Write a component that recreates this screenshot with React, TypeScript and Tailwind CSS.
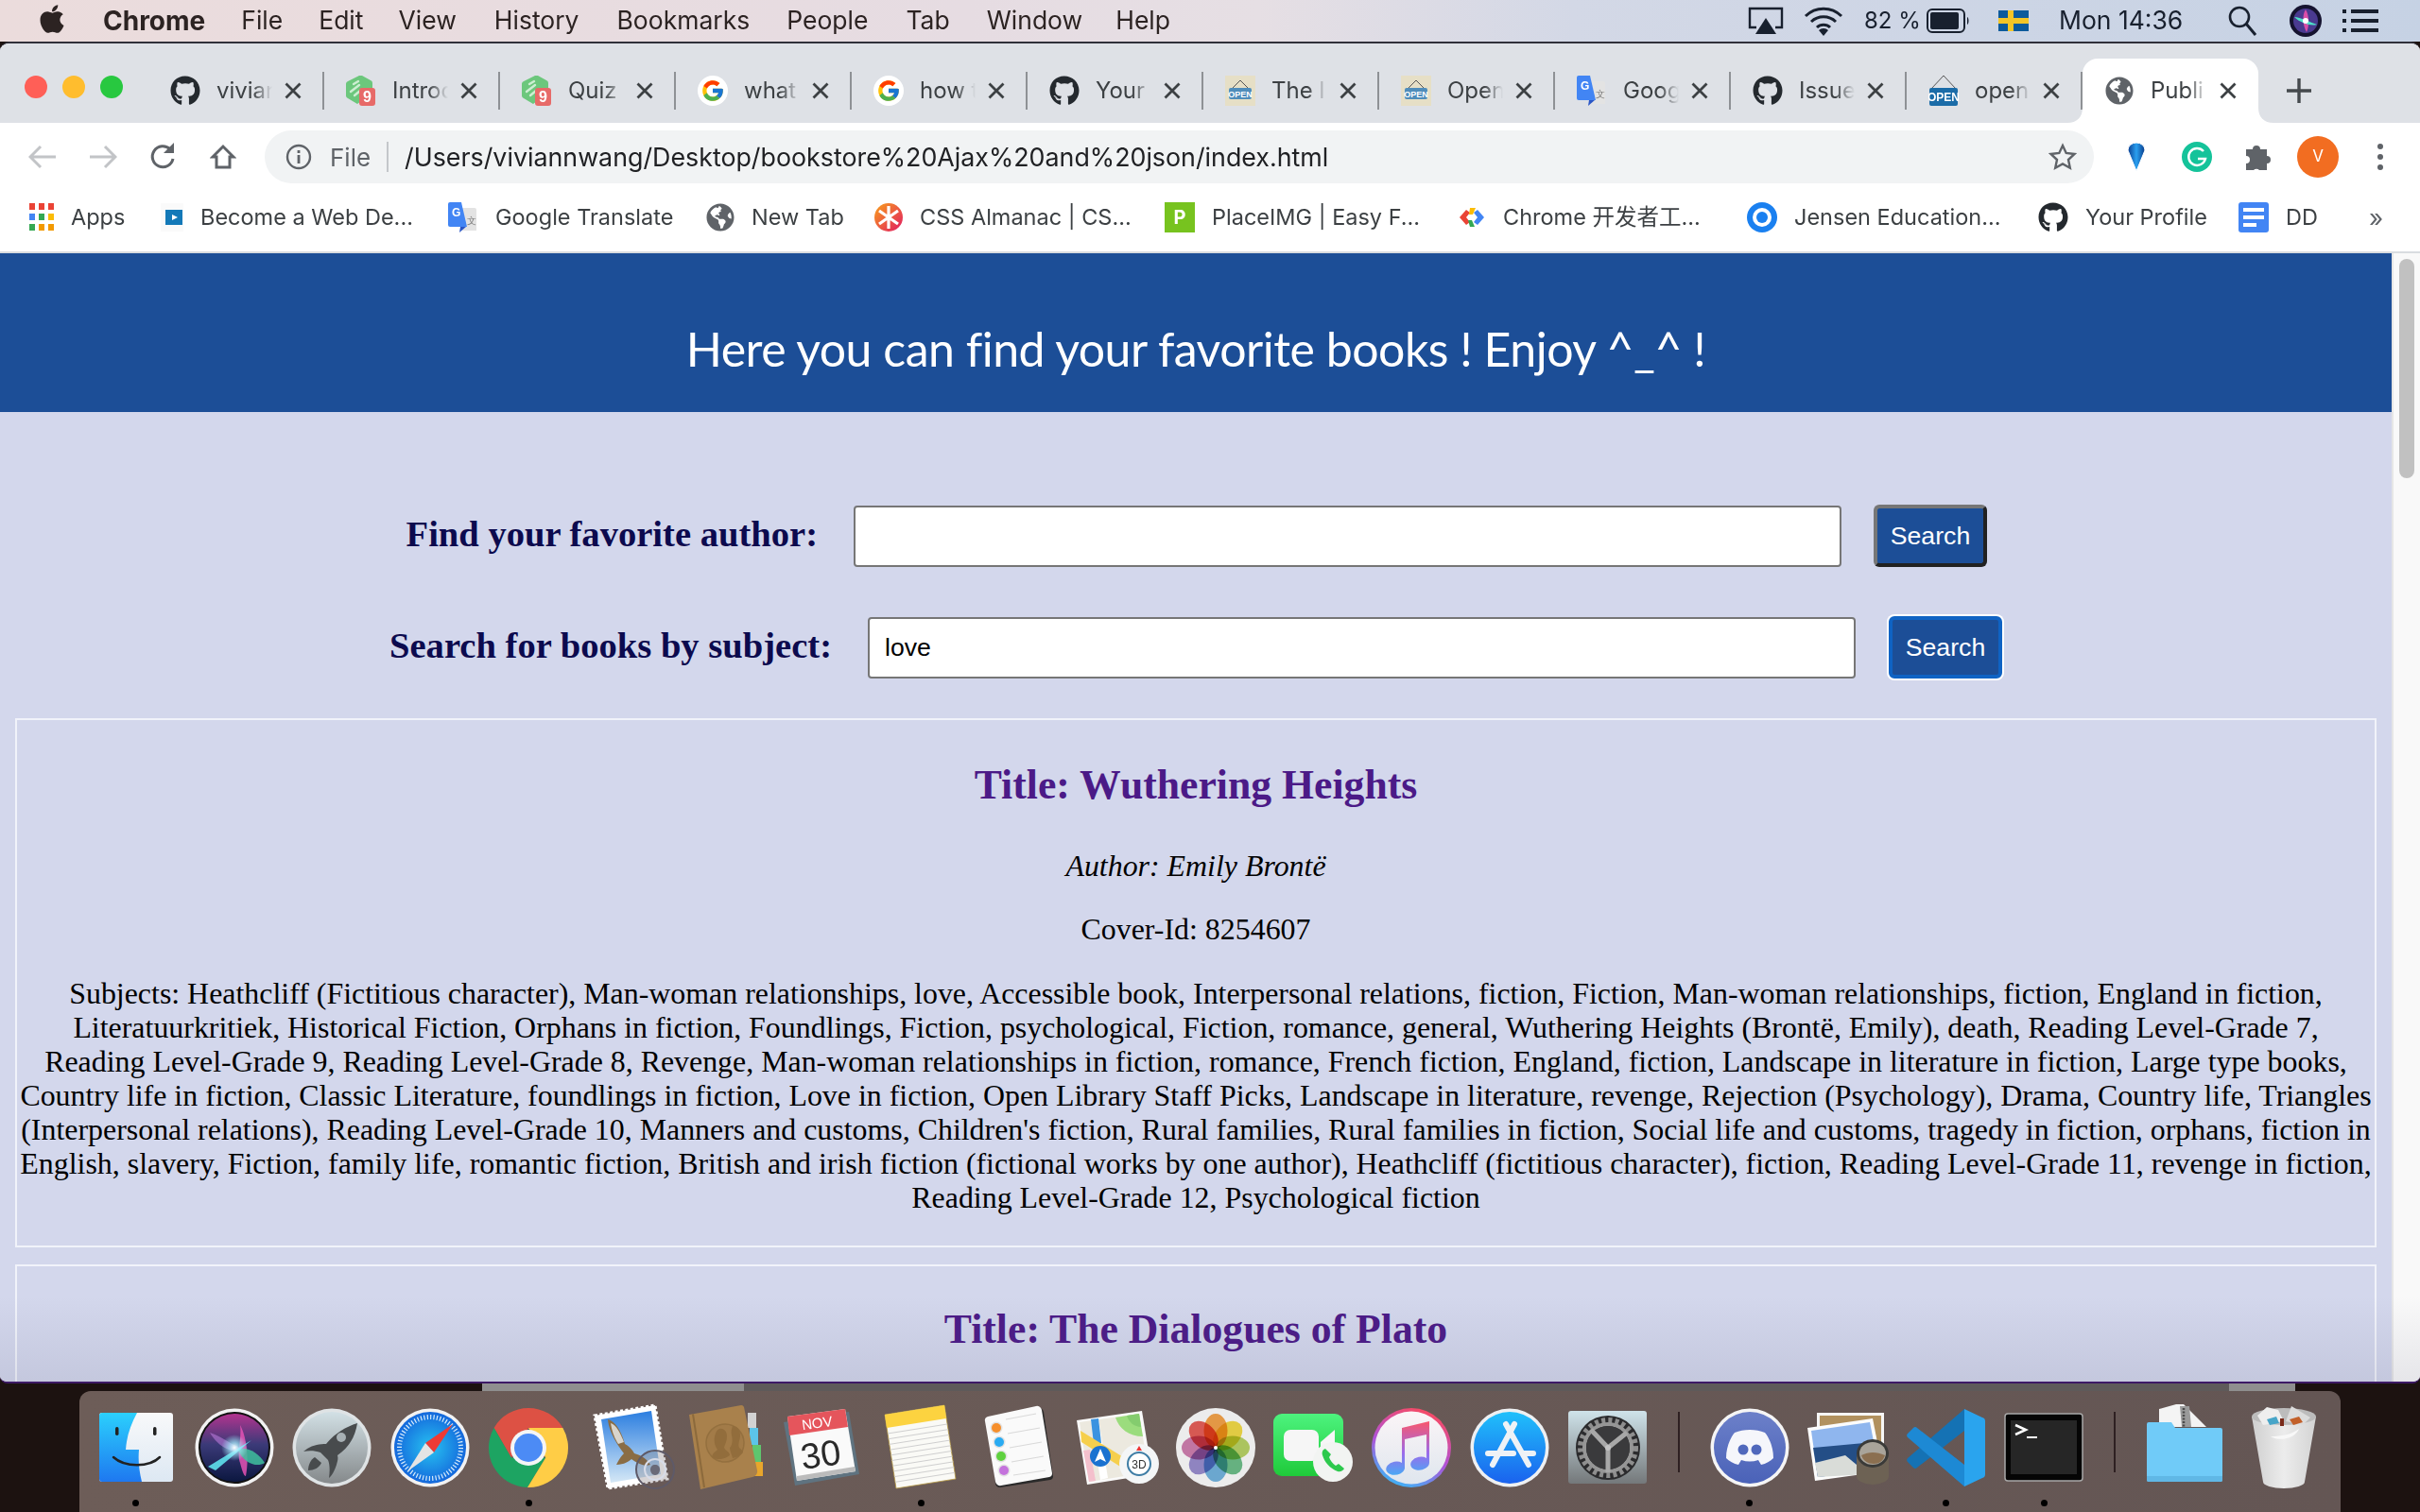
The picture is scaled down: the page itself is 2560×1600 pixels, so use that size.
import React from "react";
import { FaApple, FaGithub, FaGlobeAmericas } from "react-icons/fa";
import { FcGoogle } from "react-icons/fc";

const X = () => (
  <svg width="18" height="18" viewBox="0 0 18 18" className="shrink-0"><path d="M1.500 1.500L16.500 16.500M16.500 1.500L1.500 16.500" stroke="#3c4043" strokeWidth="2.8" /></svg>
);
const GT = ({ s = 32 }: { s?: number }) => (
  <svg width={s} height={s} viewBox="0 0 32 32" className="shrink-0">
    <path d="M14 6h14a2 2 0 0 1 2 2v22H14z" fill="#e3e3e3" />
    <path d="M2 0h12l6 26H2a2 2 0 0 1-2-2V2a2 2 0 0 1 2-2z" fill="#4285f4" />
    <path d="M13 26l-1 6 7-6z" fill="#2a56c6" />
    <text x="4" y="15" fontSize="12" fontWeight="700" fill="#fff" fontFamily="Liberation Sans">G</text>
    <text x="20" y="23" fontSize="10" fill="#777" fontFamily="Liberation Sans">文</text>
  </svg>
);
const Nine = () => (
  <svg width="32" height="32" viewBox="0 0 32 32" className="shrink-0">
    <path d="M14 0a4 4 0 0 1 3 0l9 5a3 3 0 0 1 2 3v10L12 30 2 24a3 3 0 0 1-2-3V9a3 3 0 0 1 2-3z" fill="#6cc77c" />
    <path d="M5 17l9-7M8 9l5-3M9 21l6-5" stroke="#cdeed2" strokeWidth="2.4" strokeLinecap="round" />
    <rect x="14" y="13" width="17" height="19" rx="3" fill="#e76a68" />
    <text x="22.500" y="28" fontSize="16" fontWeight="700" fill="#fff" textAnchor="middle" fontFamily="Liberation Sans">9</text>
  </svg>
);
const GoogleFav = () => (
  <span className="w-[32px] h-[32px] rounded-full bg-white flex items-center justify-center shrink-0"><FcGoogle size={26} /></span>
);
const OpenFav = () => (
  <svg width="32" height="32" viewBox="0 0 32 32" className="shrink-0">
    <rect width="32" height="32" fill="#e6dfc6" />
    <path d="M16 5L7 14M16 5l9 9" stroke="#555" strokeWidth="1" />
    <rect x="4" y="13" width="24" height="12" rx="2" fill="#4f8dbb" />
    <text x="16" y="22.500" fontSize="9" fontWeight="700" fill="#fff" textAnchor="middle" fontFamily="Liberation Sans">OPEN</text>
  </svg>
);
const OpenFav2 = () => (
  <svg width="32" height="32" viewBox="0 0 32 32" className="shrink-0">
    <path d="M16 0L3 14M16 0l13 14" stroke="#555" strokeWidth="1" fill="none" />
    <rect x="1" y="13" width="30" height="19" rx="2" fill="#1b6ca8" />
    <text x="16" y="27" fontSize="12" fontWeight="700" fill="#fff" textAnchor="middle" fontFamily="Liberation Sans">OPEN</text>
  </svg>
);
const GH = () => <FaGithub size={32} color="#24292e" className="shrink-0" />;
const Globe = () => <FaGlobeAmericas size={30} color="#5f6368" className="shrink-0" />;

const tabs: [React.ReactNode, string][] = [
  [<GH />, "vivian"], [<Nine />, "Introd"], [<Nine />, "Quiz"], [<GoogleFav />, "what"], [<GoogleFav />, "how t"], [<GH />, "Your"],
  [<OpenFav />, "The l"], [<OpenFav />, "Open"], [<GT />, "Goog"], [<GH />, "Issue"], [<OpenFav2 />, "open"],
];

const Flare = ({ flip }: { flip?: boolean }) => (
  <svg width="16" height="16" viewBox="0 0 16 16" className={flip ? "absolute bottom-0 right-[-16px]" : "absolute bottom-0 left-[-16px]"}>
    <path d={flip ? "M0 0C0 10 6 16 16 16H0z" : "M16 0C16 10 10 16 0 16H16z"} fill="#fff" />
  </svg>
);

const Tab = ({ icon, label }: { icon: React.ReactNode; label: string }) => (
  <div className="w-[186px] h-[68px] flex items-center shrink-0">
    <span className="ml-[23px] w-[32px] flex justify-center shrink-0">{icon}</span>
    <span className="ml-[17px] w-[60px] overflow-hidden whitespace-nowrap text-[24px] text-[#3c4043] [mask-image:linear-gradient(to_right,black_65%,transparent)]">{label}</span>
    <span className="ml-[13px]"><X /></span>
    <span className="ml-[22px] w-[2px] h-[40px] bg-[#8e9195] shrink-0" />
  </div>
);

const bookmarks: [React.ReactNode, string, string][] = [
  [
    <svg width="26" height="30" viewBox="0 0 26 30"><g>
      {[["#ea4335", "#ea4335", "#ea4335"], ["#4285f4", "#34a853", "#fbbc05"], ["#34a853", "#f29900", "#f29900"]].map((r, i) =>
        r.map((c, j) => <rect key={`${i}${j}`} x={j * 10} y={i * 11} width="6" height="7" fill={c} />))}
    </g></svg>, "Apps", "ml-[31px] w-[103px]"],
  [<svg width="24" height="30" viewBox="0 0 24 30"><rect width="24" height="30" fill="#fafafa" /><rect x="5" y="7" width="18" height="16" fill="#1379b8" /><path d="M12 12l6 3-6 3z" fill="#fff" /></svg>, "Become a Web De...", "ml-[36px] w-[270px]"],
  [<GT />, "Google Translate", "ml-[34px] w-[239px]"],
  [<Globe />, "New Tab", "ml-[34px] w-[145px]"],
  [
    <svg width="30" height="32" viewBox="0 0 30 32"><defs><linearGradient id="cssg" x1="0" y1="0" x2="1" y2="1"><stop offset="0" stopColor="#f9a11b" /><stop offset="1" stopColor="#e01a63" /></linearGradient></defs><circle cx="15" cy="16" r="15" fill="url(#cssg)" /><path d="M15 4v24M5 9l20 14M25 9L5 23" stroke="#fff" strokeWidth="3.2" /></svg>,
    "CSS Almanac | CS...", "ml-[33px] w-[271px]"],
  [<span className="w-[32px] h-[32px] bg-[#77c31f] flex items-center justify-center text-white font-bold text-[20px]">P</span>, "PlaceIMG | Easy F...", "ml-[36px] w-[268px]"],
  [
    <svg width="30" height="26" viewBox="0 0 30 26"><path d="M2 13L9 5l4 3-4 5 4 5-4 3z" fill="#ea4335" /><path d="M13 3h6l-3 7h-4z" fill="#fbbc05" /><path d="M28 13l-7-8-4 3 4 5-4 5 4 3z" fill="#4285f4" /><path d="M13 23h5l-3-7h-4z" fill="#34a853" /></svg>,
    "Chrome 开发者工...", "ml-[42px] w-[261px]"],
  [
    <svg width="32" height="32" viewBox="0 0 32 32"><circle cx="16" cy="16" r="16" fill="#1a80f0" /><circle cx="16" cy="16" r="10" fill="#fff" /><circle cx="16" cy="16" r="6" fill="#1a80f0" /></svg>,
    "Jensen Education...", "ml-[45px] w-[267px]"],
  [<GH />, "Your Profile", "ml-[41px] w-[179px]"],
  [
    <svg width="32" height="32" viewBox="0 0 32 32"><rect width="32" height="32" rx="3" fill="#4285f4" /><rect x="5" y="6" width="22" height="4" fill="#fff" /><rect x="5" y="14" width="22" height="4" fill="#fff" /><rect x="5" y="22" width="14" height="4" fill="#fff" /></svg>,
    "DD", "ml-[33px] w-[83px]"],
];

const Finder = () => (
  <svg viewBox="0 0 84 84">
    <defs>
      <linearGradient id="f1" x1="0" y1="0" x2="0" y2="1"><stop offset="0" stopColor="#2bd0fd" /><stop offset="1" stopColor="#1e78f0" /></linearGradient>
      <linearGradient id="f2" x1="0" y1="0" x2="0" y2="1"><stop offset="0" stopColor="#f8f9fa" /><stop offset="1" stopColor="#dde8f3" /></linearGradient>
    </defs>
    <rect x="3" y="5" width="78" height="73" rx="3" fill="url(#f2)" />
    <path d="M6 5h37C36 18 32 30 31 44h14c-1 11 0 22 3 34H6a3 3 0 0 1-3-3V8a3 3 0 0 1 3-3z" fill="url(#f1)" />
    <rect x="20" y="20" width="3.500" height="9" rx="1.700" fill="#222" /><rect x="60" y="20" width="3.500" height="9" rx="1.700" fill="#222" />
    <path d="M18 52c12 11 38 11 49 0" stroke="#222" strokeWidth="2.500" fill="none" strokeLinecap="round" />
  </svg>
);
const Siri = () => (
  <svg viewBox="0 0 84 84">
    <defs>
      <linearGradient id="s1" x1="0" y1="0" x2="0" y2="1"><stop offset="0" stopColor="#b3348f" /><stop offset="0.45" stopColor="#3b3a78" /><stop offset="1" stopColor="#0b1740" /></linearGradient>
      <radialGradient id="s2"><stop offset="0" stopColor="#ffffff" /><stop offset="0.4" stopColor="#a8f0ff" stopOpacity=".7" /><stop offset="1" stopColor="#a8f0ff" stopOpacity="0" /></radialGradient>
    </defs>
    <circle cx="42" cy="42" r="41.500" fill="#f2f2f2" /><circle cx="42" cy="42" r="38" fill="#111" /><circle cx="42" cy="42" r="36" fill="url(#s1)" />
    <path d="M48 18c2 14-4 30 0 40 2 8 4 14 6 14C58 52 54 28 48 18z" fill="#e552b4" opacity=".85" />
    <path d="M16 26c12 4 22 12 32 16-8 8-24-2-32-16z" fill="#b77ad8" opacity=".6" />
    <path d="M46 44c10-4 22 4 28 14-10 6-24-2-28-14z" fill="#3fbf9d" opacity=".85" />
    <path d="M14 62L60 34 22 66z" fill="#63ecf6" opacity=".85" />
    <circle cx="42" cy="42" r="14" fill="url(#s2)" />
  </svg>
);
const Rocket = () => (
  <svg viewBox="0 0 84 84">
    <defs><linearGradient id="r1" x1="0" y1="0" x2="0" y2="1"><stop offset="0" stopColor="#d2e0e5" /><stop offset="1" stopColor="#85898b" /></linearGradient></defs>
    <circle cx="42" cy="42" r="41.500" fill="#dfe3e5" /><circle cx="42" cy="42" r="38" fill="url(#r1)" />
    <path d="M69 16C56 20 44 28 36 38c-6 0-14 1-20 5l-4 3c6-1 12-1 18 1l8 8c2 5 2 12 1 19 3-2 6-8 8-14 1-4 2-6 1-10C60 42 67 30 69 16z" fill="#484b4d" />
    <path d="M24 52c-4 2-7 8-7 14 6 0 12-3 14-8z" fill="#484b4d" />
    <circle cx="52" cy="31" r="5" fill="#a7b0b4" />
  </svg>
);
const Safari = () => (
  <svg viewBox="0 0 84 84">
    <defs><radialGradient id="sa"><stop offset="0" stopColor="#27c2f1" /><stop offset="1" stopColor="#1468dc" /></radialGradient></defs>
    <circle cx="42" cy="42" r="41.500" fill="#f2f2f2" /><circle cx="42" cy="42" r="38" fill="url(#sa)" />
    <circle cx="42" cy="42" r="32.500" fill="none" stroke="#d9ecfb" strokeWidth="5" strokeDasharray="1.200 2.200" />
    <path d="M66 17L37 37l9 10z" fill="#ee3a35" /><path d="M18 67L37 37l9 10z" fill="#e4e4e4" />
  </svg>
);
const Chrome = () => (
  <svg viewBox="0 0 84 84">
    <path d="M5.600 21A42 42 0 0 1 78.400 21H42L23.800 52.500z" fill="#dd5144" />
    <path d="M5.600 21A42 42 0 0 0 41 84L60.200 52.500H23.800z" fill="#1da462" />
    <path d="M78.400 21A42 42 0 0 1 41 84L60.200 52.500 42 21z" fill="#ffcd46" />
    <circle cx="42" cy="42" r="19" fill="#f5f5f5" /><circle cx="42" cy="42" r="15" fill="#4c8bf5" />
  </svg>
);
const Mail = () => (
  <svg viewBox="0 0 84 84">
    <defs><linearGradient id="m1" x1="0" y1="0" x2="0" y2="1"><stop offset="0" stopColor="#2b7ee0" /><stop offset="1" stopColor="#d5e8f6" /></linearGradient></defs>
    <path d="M8 8L72 -3 85 75 22 85z" fill="#fff" stroke="#fff" strokeWidth="3" strokeDasharray="3 2.500" />
    <path d="M15 12L68 3 78 70 25 79z" fill="url(#m1)" />
    <path d="M22 12c8 2 14 12 18 26 4 2 8 6 10 10 6 2 12 4 17 12-8 2-14-2-20-6-2 2-8 6-16 6 2-4 4-8 8-12-8-10-16-24-17-36z" fill="#8a6d45" />
    <path d="M25 16c6 2 10 10 14 20l-6 2c-4-6-7-14-8-22z" fill="#d8d4cc" />
    <circle cx="72" cy="65" r="20" fill="#5e5258" fillOpacity=".25" stroke="#5e5a68" strokeWidth="2" /><circle cx="72" cy="65" r="11" fill="none" stroke="#d8dce8" strokeWidth="2" />
    <path d="M72 60c3 0 5 2 5 5s-2 6-5 6-5-3-5-6 2-5 5-5z" fill="#6a6a78" />
  </svg>
);
const Contacts = () => (
  <svg viewBox="0 0 84 84">
    <rect x="66" y="5" width="9" height="16" fill="#d2d2d2" /><rect x="68" y="21" width="9" height="18" fill="#5cc4e8" /><rect x="71" y="39" width="9" height="18" fill="#5fc66e" /><rect x="73" y="57" width="9" height="15" fill="#e8a62c" />
    <path d="M4 7L59 -3a3 3 0 0 1 3 2L76 66a6 6 0 0 1-5 7L16 86z" fill="#a9814c" />
    <path d="M8 6.300L20 84" stroke="#8c6a3c" strokeWidth="2" />
    <circle cx="42" cy="37" r="20" fill="#a27b48" stroke="#94703f" strokeWidth="1.500" />
    <path d="M36 22c5-1 8 3 8 8 0 6-3 10-3 12 2 4 6 4 6 8-5 4-12 5-18 3-2-4 2-6 5-9-3-4-4-9-3-14 1-4 2-7 5-8zM50 19c5 0 8 4 8 10 0 5-3 9-1 13 2 2 4 3 4 5-2 3-6 5-11 6-1-4-3-8-3-11 3-3 3-9 2-13-1-4 0-7 1-10z" fill="#926d3c" />
  </svg>
);
const Cal = () => (
  <svg viewBox="0 0 84 84">
    <path d="M1 15L70 4l11 66-68 12z" fill="#5f7380" />
    <path d="M5 9L66 1l11 66-62 10z" fill="#fafafa" />
    <path d="M15 72L76 62l1 5-62 10z" fill="#bbbbbb" />
    <path d="M5 9L66 1l3 19-62 9z" fill="#e5555c" />
    <text x="37" y="21" fontSize="15" fill="#fff" textAnchor="middle" transform="rotate(-8 37 21)" fontFamily="Liberation Sans">NOV</text>
    <text x="42" y="62" fontSize="38" fill="#2a2a2a" textAnchor="middle" transform="rotate(-8 42 62)" fontFamily="Liberation Sans">30</text>
  </svg>
);
const Notes = () => (
  <svg viewBox="0 0 84 84">
    <path d="M4 7L67 -3 79 75 16 85z" fill="#fafaf6" stroke="#b79a44" strokeWidth=".8" />
    <path d="M4 7L67 -3 69 11 6 21z" fill="#fcd340" />
    {[0, 1, 2, 3, 4, 5, 6, 7, 8, 9].map((i) => (
      <path key={i} d={`M${7 + i * 0.9} ${27 + i * 5.700}L${70 + i * 0.9} ${17 + i * 5.700}`} stroke="#cfcfcf" strokeWidth="1" />
    ))}
  </svg>
);
const Reminders = () => (
  <svg viewBox="0 0 84 84">
    <path d="M10 12L62 0a5 5 0 0 1 6 4l10 68a4 4 0 0 1-3 4L22 84a5 5 0 0 1-5-4z" fill="#2a2a2a" />
    <path d="M9 9L60 -2a5 5 0 0 1 6 4l11 67a4 4 0 0 1-3 4L23 82a5 5 0 0 1-6-4L6 14a4 4 0 0 1 3-5z" fill="#fafafa" />
    <circle cx="18" cy="21" r="6.500" fill="#e2e2e2" /><circle cx="18" cy="21" r="5" fill="#f68f2c" />
    <circle cx="21" cy="36" r="6.500" fill="#e2e2e2" /><circle cx="21" cy="36" r="5" fill="#2aabf2" />
    <circle cx="23" cy="51" r="6.500" fill="#e2e2e2" /><circle cx="23" cy="51" r="5" fill="#5fd13f" />
    <circle cx="26" cy="66" r="6.500" fill="#e2e2e2" /><circle cx="26" cy="66" r="5" fill="#c473dc" />
    <path d="M28 12L60 6M30 27L64 21M32 42L66 36M34 57L68 51M36 71L70 66" stroke="#d9d9d9" strokeWidth="1.200" />
  </svg>
);
const Maps = () => (
  <svg viewBox="0 0 84 84">
    <path d="M-1 13L68 3 79 70 10 81z" fill="#fafafa" />
    <path d="M2 15L65 6l10 62L12 78z" fill="#ece9df" />
    <path d="M40 10L65 6l4 24C54 30 44 22 40 10z" fill="#9bdc7d" />
    <path d="M52 8L65 6l2 14C60 20 54 15 52 8z" fill="#84cc6e" />
    <path d="M6 45L13 44l6 33-7 1z" fill="#f4c0cc" />
    <path d="M14 12L22 11 32 74 24 76z" fill="#fff" />
    <path d="M14 12L22 11 25 37 17 38z" fill="#3b93e0" />
    <path d="M3 24L58 58 50 65 4 36z" fill="#f6cf4c" />
    <circle cx="24" cy="51" r="11" fill="#1a72d0" /><path d="M24 43l6 14-6-3-6 3z" fill="#fff" />
    <circle cx="65" cy="59" r="21" fill="#f4f6f7" /><circle cx="65" cy="59" r="12" fill="#fff" stroke="#3e7da5" strokeWidth="2" />
    <text x="65" y="63.500" fontSize="12" fill="#333" textAnchor="middle" fontFamily="Liberation Sans">3D</text>
    <path d="M65 40l3 5h-6z" fill="#e33" />
  </svg>
);
const Photos = () => (
  <svg viewBox="0 0 84 84">
    <circle cx="42" cy="42" r="42" fill="#ececec" />
    {([["#f6a44a", 0], ["#f4dc48", 45], ["#b9d466", 90], ["#6ec08a", 135], ["#74b5e0", 180], ["#9b8fd0", 225], ["#d17fb0", 270], ["#e8605a", 315]] as [string, number][]).map(([c, a]) => (
      <ellipse key={a} cx="42" cy="24" rx="12.500" ry="18" fill={c} className="mix-blend-multiply" transform={`rotate(${a} 42 42)`} />
    ))}
    <circle cx="42" cy="42" r="2" fill="#fff" />
  </svg>
);
const FaceTime = () => (
  <svg viewBox="0 0 84 84">
    <defs><linearGradient id="ft" x1="0" y1="0" x2="0" y2="1"><stop offset="0" stopColor="#4df37e" /><stop offset="1" stopColor="#1fca3a" /></linearGradient></defs>
    <rect x="0" y="6" width="74" height="66" rx="9" fill="url(#ft)" />
    <rect x="11" y="23" width="37" height="33" rx="7" fill="#f6f6f6" /><path d="M50 36l15-13v30L50 44z" fill="#f6f6f6" />
    <circle cx="63" cy="57" r="21" fill="#f2f4f2" />
    <path d="M55 43c-3 1-4 4-3 7 2 7 8 14 16 17 3 1 6-1 7-3l-6-5-3 2c-3-2-6-6-7-9l2-3z" fill="#2dc94d" />
  </svg>
);
const Music = () => (
  <svg viewBox="0 0 84 84">
    <defs>
      <linearGradient id="mu" x1="0.7" y1="0" x2="0.3" y2="1"><stop offset="0" stopColor="#fb4a5e" /><stop offset="0.55" stopColor="#b052d8" /><stop offset="1" stopColor="#38b8f8" /></linearGradient>
      <linearGradient id="mn" x1="0.5" y1="0" x2="0.5" y2="1"><stop offset="0" stopColor="#f9576c" /><stop offset="0.6" stopColor="#9a6cec" /><stop offset="1" stopColor="#4aa8f4" /></linearGradient>
      <linearGradient id="mb" x1="0" y1="0" x2="0" y2="1"><stop offset="0" stopColor="#fbf5f7" /><stop offset="1" stopColor="#dfe6ee" /></linearGradient>
    </defs>
    <circle cx="42" cy="42" r="42" fill="url(#mu)" /><circle cx="42" cy="42" r="38.500" fill="url(#mb)" />
    <path d="M61 14L32 21v37a10 7 -10 1 0 3 6V33l23-5v25a10 7 -10 1 0 3 5z" fill="url(#mn)" />
  </svg>
);
const AppStore = () => (
  <svg viewBox="0 0 84 84">
    <defs><linearGradient id="as" x1="0" y1="0" x2="0" y2="1"><stop offset="0" stopColor="#20c0fb" /><stop offset="1" stopColor="#1a62ee" /></linearGradient></defs>
    <circle cx="42" cy="42" r="41.500" fill="#eef0f2" /><circle cx="42" cy="42" r="38" fill="url(#as)" />
    <path d="M47 17L24 60M38 17L62 60M19 48H46M56 48H67" stroke="#eef2f6" strokeWidth="6" strokeLinecap="round" />
  </svg>
);
const Prefs = () => (
  <svg viewBox="0 0 84 84">
    <defs><linearGradient id="pr" x1="0" y1="0" x2="0" y2="1"><stop offset="0" stopColor="#cfe3ea" /><stop offset="1" stopColor="#74787a" /></linearGradient></defs>
    <rect x="0" y="3" width="83" height="77" rx="3" fill="url(#pr)" />
    <circle cx="42" cy="42" r="34" fill="#2b2b2d" />
    <circle cx="42" cy="42" r="29" fill="none" stroke="#8e8e8e" strokeWidth="6" strokeDasharray="4 3.200" />
    <circle cx="42" cy="42" r="25" fill="none" stroke="#969696" strokeWidth="4" />
    <circle cx="42" cy="42" r="23" fill="#3a3a3c" />
    <path d="M42 42L24 23M42 42L62 26M42 42V68" stroke="#a8a8a8" strokeWidth="5" />
    <circle cx="42" cy="42" r="3" fill="#c4c4c4" />
  </svg>
);
const Discord = () => (
  <svg viewBox="0 0 84 84">
    <defs><linearGradient id="dc" x1="0" y1="0" x2="0" y2="1"><stop offset="0" stopColor="#6c80c9" /><stop offset="1" stopColor="#4a62b8" /></linearGradient></defs>
    <circle cx="42" cy="42" r="41.500" fill="#f5f5f5" /><circle cx="42" cy="42" r="38" fill="url(#dc)" />
    <path d="M26 26c5-2 10-3 16-3s11 1 16 3c5 6 9 16 9 27-3 3-8 6-13 7l-3-5c-6 2-12 2-18 0l-3 5c-5-1-10-4-13-7 0-11 4-21 9-27z" fill="#f5f6fb" />
    <circle cx="35" cy="44" r="5.500" fill="#5068bc" /><circle cx="49" cy="44" r="5.500" fill="#5068bc" />
  </svg>
);
const Preview = () => (
  <svg viewBox="0 0 84 84">
    <path d="M10 5h71v50H10z" fill="#f6f6f6" /><path d="M13 8h65v44H13z" fill="#b1915f" />
    <path d="M0 21L69 11l11 56L8 77z" fill="#fcfcfc" />
    <path d="M4 24L66 15l10 50L11 73z" fill="#8fb6ee" />
    <path d="M6 42L71 36l5 29L11 73z" fill="#244e86" />
    <path d="M8 58L40 50l24 20-53 3z" fill="#d9dcd8" />
    <path d="M52 48h34v24a17 9 0 0 1-34 0z" fill="#6d6254" />
    <ellipse cx="69" cy="48" rx="17" ry="15" fill="#3a3a38" /><ellipse cx="69" cy="48" rx="14" ry="12" fill="#a9a49a" />
    <path d="M57 50c8-4 16-4 25 0-2 6-6 9-12 9s-11-3-13-9z" fill="#8b6f50" />
  </svg>
);
const VSCode = () => (
  <svg viewBox="0 0 84 84">
    <path d="M62 1L62 24 12 63a3 3 0 0 1-4 0L2 57a3 3 0 0 1 0-4z" fill="#1572b4" />
    <path d="M8 21a3 3 0 0 1 4 0L62 60V83L2 31a3 3 0 0 1 0-4z" fill="#1d89d4" />
    <path d="M62 1L81 10a4 4 0 0 1 3 4V70a4 4 0 0 1-3 4L62 83z" fill="#2aa4ee" />
  </svg>
);
const Terminal = () => (
  <svg viewBox="0 0 84 84">
    <rect x="1" y="6" width="82" height="71" rx="3" fill="#050505" stroke="#a8a8a8" strokeWidth="1.500" />
    <rect x="7" y="13" width="70" height="57" fill="#262626" />
    <path d="M12 18l11 5-11 5" stroke="#fff" strokeWidth="2.500" fill="none" /><path d="M24 31h11" stroke="#fff" strokeWidth="2" />
  </svg>
);
const Folder = () => (
  <svg viewBox="0 0 84 84">
    <path d="M14 1L32 -4h8L64 20H14z" fill="#f4f4f4" />
    <path d="M36 -2h10l2 22H38z" fill="#9a9a9a" /><path d="M40 0v20" stroke="#4a4a4a" strokeWidth="2.500" strokeDasharray="2 1.500" />
    <path d="M1 17a2 2 0 0 1 2-2h24l4 6h48a2 2 0 0 1 2 2v53a2 2 0 0 1-2 2H3a2 2 0 0 1-2-2z" fill="#70cbf8" />
    <path d="M1 72h80v4a2 2 0 0 1-2 2H3a2 2 0 0 1-2-2z" fill="#60b8e6" />
  </svg>
);
const Trash = () => (
  <svg viewBox="0 0 84 84">
    <defs><linearGradient id="tr" x1="0" y1="0" x2="1" y2="0"><stop offset="0" stopColor="#cfcfcf" /><stop offset="0.5" stopColor="#ececec" /><stop offset="1" stopColor="#d4d4d4" /></linearGradient></defs>
    <path d="M8 9L20 78a22 7 0 0 0 44 0L76 9z" fill="url(#tr)" />
    <ellipse cx="42" cy="9" rx="34" ry="9" fill="#bcbcbc" />
    <path d="M14 8L24 -1l12 3 6 12-22 4z" fill="#eeeeee" /><path d="M44 14L50 -2l10 6 10 6-8 8z" fill="#dcdcdc" />
    <path d="M24 12l10-3 3 7-10 2z" fill="#47a5c8" /><path d="M48 12l10-3 4 6-10 3z" fill="#c2602a" /><path d="M38 11h4v8h-4z" fill="#7a2a1a" />
    <path d="M28 30c12 0 22-2 30-8-4 10-20 14-30 8z" fill="#f8f8f8" />
  </svg>
);

const dockA: [React.ReactNode, boolean][] = [
  [<Finder />, true], [<Siri />, false], [<Rocket />, false], [<Safari />, false], [<Chrome />, true], [<Mail />, false], [<Contacts />, false], [<Cal />, false],
  [<Notes />, true], [<Reminders />, false], [<Maps />, false], [<Photos />, false], [<FaceTime />, false], [<Music />, false], [<AppStore />, false], [<Prefs />, false],
];
const dockB: [React.ReactNode, boolean][] = [[<Discord />, true], [<Preview />, false], [<VSCode />, true], [<Terminal />, true]];
const dockC: [React.ReactNode, boolean][] = [[<Folder />, false], [<Trash />, false]];

const DockItem = ({ icon, dot }: { icon: React.ReactNode; dot: boolean }) => (
  <div className="w-[103.8px] shrink-0 flex flex-col items-center pt-[18px]">
    <div className="w-[84px] h-[84px] [&>svg]:overflow-visible">{icon}</div>
    <div className={dot ? "mt-[13px] w-[7px] h-[7px] rounded-full bg-black" : "mt-[13px] w-[7px] h-[7px]"} />
  </div>
);
const DockSep = () => (
  <div className="w-[46px] shrink-0 flex justify-center pt-[16px]"><div className="w-[2px] h-[64px] bg-[#2e2022] mt-[6px]" /></div>
);

export default function App() {
  return (
    <div className="w-[2560px] h-[1600px] overflow-hidden bg-[#1c1210] flex flex-col font-['Inter',sans-serif]">
      {/* menu bar */}
      <div className="h-[44px] shrink-0 flex items-center bg-[linear-gradient(90deg,#ebdcdc_0%,#e6dce2_40%,#e6dfe4_52%,#d3d8e6_65%,#c6d2e4_100%)] text-[#2c2322] text-[26.5px]">
        <FaApple size={34} color="#2c2322" className="ml-[38px] mb-[4px]" />
        <span className="ml-[37px] font-bold text-[28px]">Chrome</span>
        <span className="ml-[38px]">File</span>
        <span className="ml-[38px]">Edit</span>
        <span className="ml-[37px]">View</span>
        <span className="ml-[40px]">History</span>
        <span className="ml-[40px]">Bookmarks</span>
        <span className="ml-[39px]">People</span>
        <span className="ml-[40px]">Tab</span>
        <span className="ml-[39px]">Window</span>
        <span className="ml-[35px]">Help</span>
        <div className="ml-auto flex items-center text-[#18202e]">
          <svg width="38" height="30" viewBox="0 0 38 30"><path d="M9 22H2V2h34v20h-7" fill="none" stroke="#18202e" strokeWidth="2.400" /><path d="M19 12l11 17H8z" fill="#18202e" /></svg>
          <svg width="42" height="32" viewBox="0 0 42 32" className="ml-[21px]"><path d="M2 11a27 27 0 0 1 38 0M8 17a19 19 0 0 1 26 0M14 23a10 10 0 0 1 14 0" fill="none" stroke="#18202e" strokeWidth="3" /><path d="M21 32l-5-6a7 7 0 0 1 10 0z" fill="#18202e" /></svg>
          <span className="ml-[22px] w-[58px] text-[24px] whitespace-nowrap">82 %</span>
          <svg width="46" height="26" viewBox="0 0 46 26" className="ml-[8px]"><rect x="1" y="1" width="39" height="24" rx="5" fill="none" stroke="#18202e" strokeWidth="2" /><rect x="4" y="4" width="30" height="18" rx="2" fill="#18202e" /><path d="M43 9c2 1 2 7 0 8z" fill="#18202e" /></svg>
          <svg width="32" height="22" viewBox="0 0 32 22" className="ml-[30px]"><rect width="32" height="22" fill="#0b5a9c" /><rect x="10" width="6" height="22" fill="#f3c526" /><rect y="8" width="32" height="6" fill="#f3c526" /></svg>
          <span className="ml-[32px] w-[140px] whitespace-nowrap">Mon 14:36</span>
          <svg width="32" height="34" viewBox="0 0 32 34" className="ml-[38px]"><circle cx="13" cy="13" r="10" fill="none" stroke="#18202e" strokeWidth="2.600" /><path d="M20 20l10 12" stroke="#18202e" strokeWidth="3" /></svg>
          <svg width="34" height="34" viewBox="0 0 34 34" className="ml-[34px]">
            <circle cx="17" cy="17" r="17" fill="#15132f" /><circle cx="17" cy="17" r="13" fill="#4a3a90" />
            <path d="M17 5c4 6 4 18 1 24C14 22 13 11 17 5z" fill="#d94da8" /><path d="M5 13c6 0 18 6 24 8-7 2-18-2-24-8z" fill="#4de0c8" /><circle cx="17" cy="17" r="3" fill="#fff" />
          </svg>
          <svg width="38" height="24" viewBox="0 0 38 24" className="ml-[22px] mr-[44px]"><g fill="#18202e"><rect width="4" height="4" /><rect x="9" width="29" height="4" /><rect y="10" width="4" height="4" /><rect x="9" y="10" width="29" height="4" /><rect y="20" width="4" height="4" /><rect x="9" y="20" width="29" height="4" /></g></svg>
        </div>
      </div>

      {/* browser window */}
      <div className="h-[1420px] shrink-0 flex flex-col rounded-t-[10px] rounded-b-[8px] overflow-hidden border-t-[2px] border-[#30303a] border-b-[2px] border-b-[#3d1a66] bg-white">
        <div className="h-[84px] shrink-0 bg-[#dee1e6] flex items-end relative">
          <div className="absolute left-[26px] top-[34px] flex gap-[16px]">
            <span className="w-[24px] h-[24px] rounded-full bg-[#ff5f57]" />
            <span className="w-[24px] h-[24px] rounded-full bg-[#ffbd2e]" />
            <span className="w-[24px] h-[24px] rounded-full bg-[#28c840]" />
          </div>
          <div className="ml-[157px] flex">
            {tabs.map(([icon, label], i) => <Tab key={i} icon={icon} label={label} />)}
            <div className="relative w-[186px] h-[68px] bg-white rounded-t-[16px] flex items-center shrink-0">
              <Flare /><Flare flip />
              <span className="ml-[23px] w-[32px] flex justify-center"><Globe /></span>
              <span className="ml-[17px] w-[60px] overflow-hidden whitespace-nowrap text-[24px] text-[#3c4043] [mask-image:linear-gradient(to_right,black_65%,transparent)]">Publi</span>
              <span className="ml-[13px]"><X /></span>
            </div>
            <svg width="26" height="26" viewBox="0 0 26 26" className="ml-[30px] self-center"><path d="M13 0v26M0 13h26" stroke="#45494d" strokeWidth="3.400" /></svg>
          </div>
        </div>

        {/* toolbar */}
        <div className="h-[72px] shrink-0 bg-white flex items-center">
          <svg width="30" height="26" viewBox="0 0 30 26" className="ml-[30px]"><path d="M29 13H3M13 2L2 13l11 11" fill="none" stroke="#c2c4c7" strokeWidth="3" /></svg>
          <svg width="30" height="26" viewBox="0 0 30 26" className="ml-[34px]"><path d="M1 13h26M17 2l11 11-11 11" fill="none" stroke="#c2c4c7" strokeWidth="3" /></svg>
          <svg width="30" height="30" viewBox="0 0 30 30" className="ml-[34px]"><path d="M25 17a11 11 0 1 1-3-10" fill="none" stroke="#5f6368" strokeWidth="3" /><path d="M26 0v11H15z" fill="#5f6368" /></svg>
          <svg width="28" height="28" viewBox="0 0 28 28" className="ml-[34px]"><path d="M14 3L3 14h4v11h14V14h4z" fill="none" stroke="#5f6368" strokeWidth="3" strokeLinejoin="miter" /></svg>
          <div className="ml-[30px] w-[1935px] h-[56px] rounded-full bg-[#f1f3f4] flex items-center">
            <svg width="28" height="28" viewBox="0 0 28 28" className="ml-[22px]"><circle cx="14" cy="14" r="12" fill="none" stroke="#5f6368" strokeWidth="2.400" /><rect x="12.600" y="12" width="2.800" height="9" fill="#5f6368" /><rect x="12.600" y="7" width="2.800" height="3" fill="#5f6368" /></svg>
            <span className="ml-[19px] text-[26px] text-[#5f6368]">File</span>
            <span className="ml-[17px] w-[2px] h-[32px] bg-[#c4c7ca]" />
            <span className="ml-[17px] text-[26.8px] text-[#202124] whitespace-nowrap">/Users/viviannwang/Desktop/bookstore%20Ajax%20and%20json/index.html</span>
            <svg width="30" height="30" viewBox="0 0 30 30" className="ml-auto mr-[18px]"><path d="M15 3l3.700 8 8.800 1-6.500 6 1.800 8.700L15 22.400 7.200 26.700 9 18 2.500 12l8.800-1z" fill="none" stroke="#5f6368" strokeWidth="2.400" /></svg>
          </div>
          <svg width="20" height="32" viewBox="0 0 20 32" className="ml-[35px]"><defs><linearGradient id="pin" x1="0" y1="0" x2="1" y2="0"><stop offset="0" stopColor="#0a3d91" /><stop offset="0.5" stopColor="#2aa0f0" /><stop offset="1" stopColor="#083a8a" /></linearGradient></defs><path d="M10 31L1 9a9 8 0 0 1 18 0z" fill="url(#pin)" stroke="#fff" strokeWidth="1" /></svg>
          <svg width="32" height="32" viewBox="0 0 32 32" className="ml-[38px]"><circle cx="16" cy="16" r="16" fill="#15c39a" /><path d="M23 10a9 9 0 1 0 2 8h-8" fill="none" stroke="#fff" strokeWidth="2.400" /></svg>
          <svg width="32" height="32" viewBox="0 0 32 32" className="ml-[32px]"><path d="M4 8h7a4 4 0 0 1 8 0h7v7a4 4 0 0 1 0 8v7h-8a4 4 0 0 0-6 0H4v-7a4 4 0 0 0 0-8z" fill="#5f6368" /></svg>
          <span className="ml-[26px] w-[44px] h-[44px] rounded-full bg-[#f26d21] text-white text-[17px] flex items-center justify-center">V</span>
          <svg width="6" height="28" viewBox="0 0 6 28" className="ml-[41px]"><circle cx="3" cy="3" r="3" fill="#5f6368" /><circle cx="3" cy="14" r="3" fill="#5f6368" /><circle cx="3" cy="25" r="3" fill="#5f6368" /></svg>
        </div>

        {/* bookmarks */}
        <div className="h-[66px] shrink-0 bg-white border-b-[2px] border-[#d9dce0] pb-[8px] flex items-center text-[23.5px] text-[#3c4043] font-['Inter','Noto_Sans_CJK_SC',sans-serif]">
          {bookmarks.map(([icon, text, cls], i) => (
            <div key={i} className={`flex items-center shrink-0 whitespace-nowrap ${cls}`}>
              <span className="flex items-center justify-center shrink-0">{icon}</span>
              <span className="ml-[18px]">{text}</span>
            </div>
          ))}
          <span className="ml-[55px] text-[26px] text-[#5f6368]">»</span>
        </div>

        {/* page */}
        <div className="flex-1 min-h-0 flex relative overflow-hidden">
          <div className="w-[2530px] shrink-0 bg-[#d3d7ec] font-['Liberation_Serif',serif] text-black">
            <div className="h-[168px] bg-[#1c4e97] flex items-center justify-center pt-[34px]">
              <h1 className="font-['Lato',sans-serif] text-[50px] text-white tracking-[-0.5px] font-normal">Here you can find your favorite books ! Enjoy ^_^ !</h1>
            </div>

            <div className="mt-[98px] flex items-center justify-center h-[66px]">
              <label className="w-[437px] pb-[3px] whitespace-nowrap text-[38.6px] font-bold text-[#0c0a4e] text-right">Find your favorite author:</label>
              <input readOnly value="" className="ml-[38px] w-[1045px] h-[65px] bg-white border-[2px] border-[#767676] rounded-[4px] px-[16px] font-['Liberation_Sans',sans-serif] text-[26.67px]" />
              <button className="ml-[34px] w-[120px] h-[66px] bg-[#1c4e97] text-white text-[26.67px] font-['Liberation_Sans',sans-serif] rounded-[6px] border-[4px] border-t-[#767676] border-l-[#767676] border-r-[#212121] border-b-[#212121]">Search</button>
            </div>
            <div className="mt-[52px] flex items-center justify-center h-[66px]">
              <label className="w-[468px] pb-[3px] whitespace-nowrap text-[38.6px] font-bold text-[#0c0a4e] text-right">Search for books by subject:</label>
              <input readOnly value="love" className="ml-[38px] w-[1045px] h-[65px] bg-white border-[2px] border-[#767676] rounded-[4px] px-[16px] text-black font-['Liberation_Sans',sans-serif] text-[26.67px]" />
              <button className="ml-[35px] w-[120px] h-[66px] bg-[#1c4e97] text-white text-[26.67px] font-['Liberation_Sans',sans-serif] rounded-[6px] border-[4px] border-[#0f63c4] shadow-[0_0_0_2px_#ffffff]">Search</button>
            </div>

            <div className="mt-[42px] mx-[16px] border-[2px] border-[#f1f3fa] text-center text-[31.9px] leading-[36px] pb-[32px]">
              <h2 className="mt-[41px] mb-[41px] text-[43.7px] leading-[55px] font-bold text-[#4b1a87]">Title: Wuthering Heights</h2>
              <p className="italic">Author: Emily Brontë</p>
              <p className="mt-[31px]">Cover-Id: 8254607</p>
              <p className="mt-[32px] whitespace-nowrap">
                Subjects: Heathcliff (Fictitious character), Man-woman relationships, love, Accessible book, Interpersonal relations, fiction, Fiction, Man-woman relationships, fiction, England in fiction,<br />
                Literatuurkritiek, Historical Fiction, Orphans in fiction, Foundlings, Fiction, psychological, Fiction, romance, general, Wuthering Heights (Brontë, Emily), death, Reading Level-Grade 7,<br />
                Reading Level-Grade 9, Reading Level-Grade 8, Revenge, Man-woman relationships in fiction, romance, French fiction, England, fiction, Landscape in literature in fiction, Large type books,<br />
                Country life in fiction, Classic Literature, foundlings in fiction, Love in fiction, Open Library Staff Picks, Landscape in literature, revenge, Rejection (Psychology), Drama, Country life, Triangles<br />
                (Interpersonal relations), Reading Level-Grade 10, Manners and customs, Children's fiction, Rural families, Rural families in fiction, Social life and customs, tragedy in fiction, orphans, fiction in<br />
                English, slavery, Fiction, family life, romantic fiction, British and irish fiction (fictional works by one author), Heathcliff (fictitious character), fiction, Reading Level-Grade 11, revenge in fiction,<br />
                Reading Level-Grade 12, Psychological fiction
              </p>
            </div>
            <div className="mt-[18px] mx-[16px] border-[2px] border-[#f1f3fa] text-center h-[200px]">
              <h2 className="mt-[39px] text-[43.7px] leading-[55px] font-bold text-[#4b1a87]">Title: The Dialogues of Plato</h2>
            </div>
          </div>
          <div className="flex-1 bg-[#f9f9f9] border-l-[2px] border-[#e6e6e6] pt-[6px] flex justify-center">
            <div className="w-[16px] h-[232px] rounded-full bg-[#c1c1c1]" />
          </div>
          <div className="absolute left-0 right-0 bottom-0 h-[90px] bg-[linear-gradient(to_bottom,rgba(90,90,120,0),rgba(90,90,120,0.12))] pointer-events-none" />
        </div>
      </div>

      {/* strip of a window behind */}
      <div className="h-[8px] shrink-0 flex pl-[510px]">
        <div className="w-[277px] bg-[#8f8f8f]" />
        <div className="w-[1571px] bg-[#5e5a5a]" />
        <div className="w-[70px] bg-[#8f8f8f]" />
      </div>

      {/* dock */}
      <div className="flex-1 ml-[84px] w-[2392px] rounded-t-[12px] bg-[linear-gradient(90deg,#6d5d58,#645654)] flex pl-[8px]">
        {dockA.map(([icon, dot], i) => <DockItem key={i} icon={icon} dot={dot} />)}
        <DockSep />
        {dockB.map(([icon, dot], i) => <DockItem key={i} icon={icon} dot={dot} />)}
        <DockSep />
        {dockC.map(([icon, dot], i) => <DockItem key={i} icon={icon} dot={dot} />)}
      </div>
    </div>
  );
}
